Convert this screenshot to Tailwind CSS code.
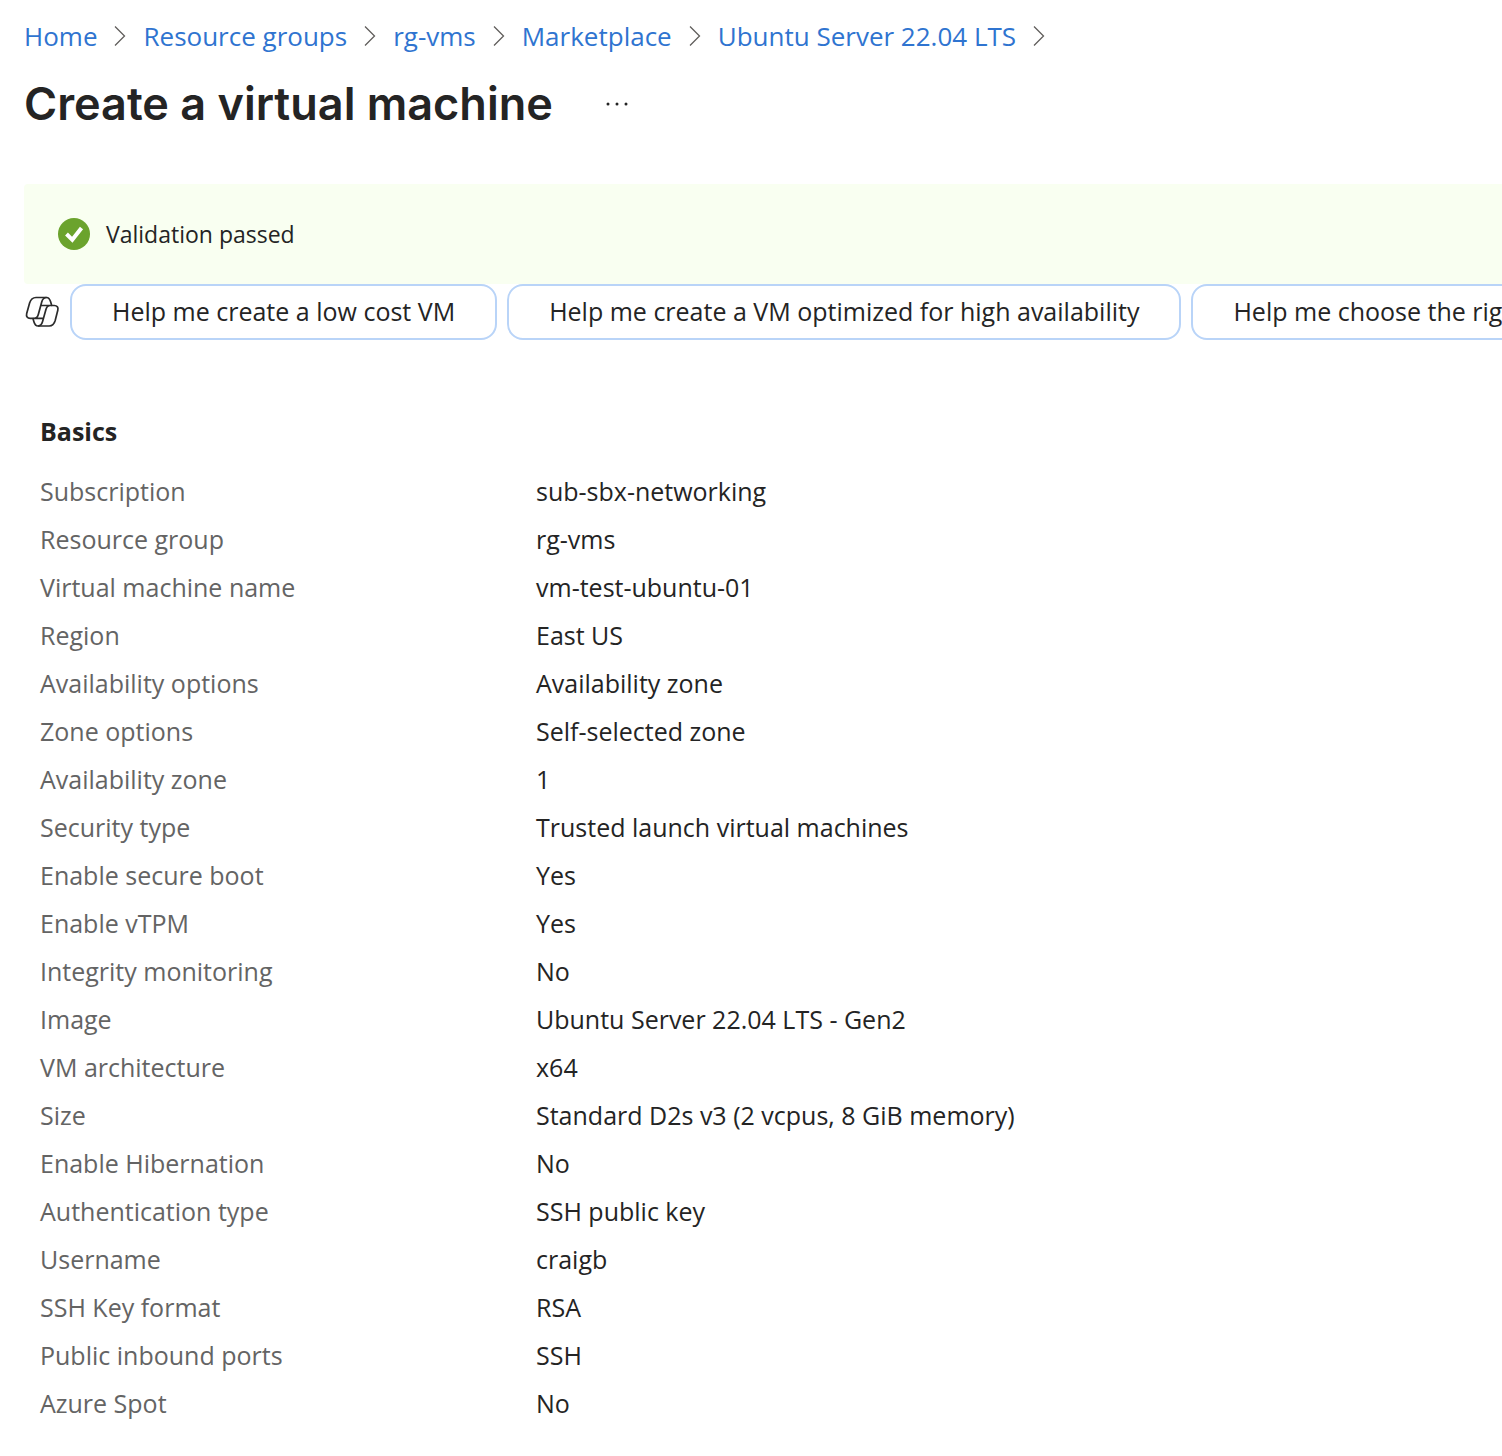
<!DOCTYPE html>
<html lang="en">
<head>
<meta charset="utf-8">
<meta name="viewport" content="width=device-width, initial-scale=1">
<title>Create a virtual machine</title>
<script src="https://cdn.jsdelivr.net/npm/@tailwindcss/browser@4"></script>
</head>
<body class="bg-white font-['Segoe_UI','Open_Sans','Noto_Sans',sans-serif] text-[25px] text-[#242424]">
<svg class="hidden" aria-hidden="true">
  <symbol id="chevron" viewBox="0 0 12 20"><path d="M1 .5 10.500 10 1 19.500" fill="none" stroke="#605e5c" stroke-width="1.300"/></symbol>
</svg>
<header class="px-6 pt-4">
  <nav aria-label="Breadcrumb">
    <ol class="flex items-center whitespace-nowrap text-[26px] leading-10 text-[#2f74d0]">
      <li class="flex items-center"><a href="#">Home</a><svg class="mx-[17px] h-5 w-3"><use href="#chevron"/></svg></li>
      <li class="flex items-center"><a href="#">Resource groups</a><svg class="mx-[17px] h-5 w-3"><use href="#chevron"/></svg></li>
      <li class="flex items-center"><a href="#">rg-vms</a><svg class="mx-[17px] h-5 w-3"><use href="#chevron"/></svg></li>
      <li class="flex items-center"><a href="#">Marketplace</a><svg class="mx-[17px] h-5 w-3"><use href="#chevron"/></svg></li>
      <li class="flex items-center"><a href="#">Ubuntu Server 22.04 LTS</a><svg class="mx-[17px] h-5 w-3"><use href="#chevron"/></svg></li>
    </ol>
  </nav>
  <div class="mt-4 flex items-center gap-12">
    <h1 class="font-['Inter',sans-serif] text-[45px] leading-[64px] font-semibold">Create a virtual machine</h1>
    <button type="button" aria-label="More options" class="flex h-8 w-8 items-center justify-center">
      <svg class="h-2 w-6" viewBox="0 0 24 8" fill="#242424"><circle cx="3" cy="4" r="1.500"/><circle cx="12" cy="4" r="1.500"/><circle cx="21" cy="4" r="1.500"/></svg>
    </button>
  </div>
</header>
<main class="mt-12 pl-6">
  <div role="status" class="flex h-[100px] items-center gap-4 rounded-l bg-[#f9fff1] pl-[34px] text-[23px]">
    <svg class="h-8 w-8" viewBox="0 0 32 32"><circle cx="16" cy="16" r="16" fill="#6ba32d"/><path d="m8.500 16 5.800 5.800 9.200-11.800" fill="none" stroke="#fff" stroke-width="4"/></svg>
    <span>Validation passed</span>
  </div>
  <div class="flex items-center gap-[10px] overflow-hidden">
    <svg class="h-9 w-9 shrink-0" viewBox="0 0 36 36" fill="none" stroke="#2b2b2b" stroke-width="1.700" stroke-linejoin="round">
      <path d="M12 3.500h10.500c2.500 0 3.500 2 4.200 4.500l1 3.500h2.600c2.800 0 4.200 2 3.500 4.800l-2.600 10.200c-1 3.500-2.500 5.500-6 5.500H14c-2.500 0-3.400-2-4.100-4.300l-1-3.400H6.200c-2.900 0-4.200-2-3.500-4.800L5.600 9C6.700 5.500 8.500 3.500 12 3.500Z"/>
      <path d="M22.500 3.500c-2.600 0-4 1.700-4.700 4.200l-3.500 12.800c-.7 2.400-2 3.800-4.300 3.800H8.900M14 32c2.500 0 3.800-1.700 4.500-4.200L22 15.300c.7-2.400 2-3.800 4.300-3.800h1.400M16.800 11.500h10M9 24.300h10.300"/>
    </svg>
    <button type="button" class="h-14 shrink-0 rounded-2xl border-2 border-[#b9d4f8] bg-white px-10 whitespace-nowrap">Help me create a low cost VM</button>
    <button type="button" class="h-14 shrink-0 rounded-2xl border-2 border-[#b9d4f8] bg-white px-10 whitespace-nowrap">Help me create a VM optimized for high availability</button>
    <button type="button" class="h-14 shrink-0 rounded-2xl border-2 border-[#b9d4f8] bg-white px-10 whitespace-nowrap">Help me choose the right VM size for my workload</button>
  </div>
  <section class="mt-[67px] pb-7 pl-4">
    <h2 class="text-[25px] leading-12 font-bold">Basics</h2>
    <table class="mt-3 w-full table-fixed text-left leading-12">
      <colgroup><col class="w-[496px]"><col></colgroup>
      <tbody>
        <tr><th scope="row" class="font-normal text-[#646464]">Subscription</th><td>sub-sbx-networking</td></tr>
        <tr><th scope="row" class="font-normal text-[#646464]">Resource group</th><td>rg-vms</td></tr>
        <tr><th scope="row" class="font-normal text-[#646464]">Virtual machine name</th><td>vm-test-ubuntu-01</td></tr>
        <tr><th scope="row" class="font-normal text-[#646464]">Region</th><td>East US</td></tr>
        <tr><th scope="row" class="font-normal text-[#646464]">Availability options</th><td>Availability zone</td></tr>
        <tr><th scope="row" class="font-normal text-[#646464]">Zone options</th><td>Self-selected zone</td></tr>
        <tr><th scope="row" class="font-normal text-[#646464]">Availability zone</th><td>1</td></tr>
        <tr><th scope="row" class="font-normal text-[#646464]">Security type</th><td>Trusted launch virtual machines</td></tr>
        <tr><th scope="row" class="font-normal text-[#646464]">Enable secure boot</th><td>Yes</td></tr>
        <tr><th scope="row" class="font-normal text-[#646464]">Enable vTPM</th><td>Yes</td></tr>
        <tr><th scope="row" class="font-normal text-[#646464]">Integrity monitoring</th><td>No</td></tr>
        <tr><th scope="row" class="font-normal text-[#646464]">Image</th><td>Ubuntu Server 22.04 LTS - Gen2</td></tr>
        <tr><th scope="row" class="font-normal text-[#646464]">VM architecture</th><td>x64</td></tr>
        <tr><th scope="row" class="font-normal text-[#646464]">Size</th><td>Standard D2s v3 (2 vcpus, 8 GiB memory)</td></tr>
        <tr><th scope="row" class="font-normal text-[#646464]">Enable Hibernation</th><td>No</td></tr>
        <tr><th scope="row" class="font-normal text-[#646464]">Authentication type</th><td>SSH public key</td></tr>
        <tr><th scope="row" class="font-normal text-[#646464]">Username</th><td>craigb</td></tr>
        <tr><th scope="row" class="font-normal text-[#646464]">SSH Key format</th><td>RSA</td></tr>
        <tr><th scope="row" class="font-normal text-[#646464]">Public inbound ports</th><td>SSH</td></tr>
        <tr><th scope="row" class="font-normal text-[#646464]">Azure Spot</th><td>No</td></tr>
      </tbody>
    </table>
  </section>
</main>
</body>
</html>
